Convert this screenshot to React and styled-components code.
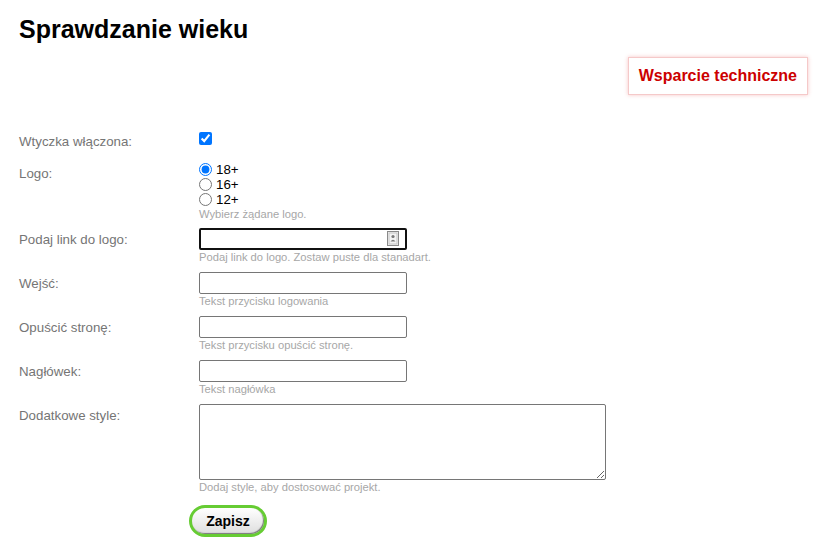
import React from "react";
import styled, { createGlobalStyle } from "styled-components";

const Global = createGlobalStyle`
  html, body { margin: 0; padding: 0; background: #fff; }
  body { font-family: Arial, "Liberation Sans", sans-serif; color: #000; }
  * { box-sizing: border-box; }
`;

const Page = styled.div`
  padding: 0 28px 0 19px;
`;

const Title = styled.h1`
  margin: 15px 0 0;
  font-size: 25px;
  line-height: 28px;
  font-weight: 700;
  color: #000;
`;

const SupportBar = styled.div`
  display: flex;
  justify-content: flex-end;
  margin-top: 14px;
`;

const SupportLink = styled.a`
  display: block;
  padding: 9px 10px;
  border: 1px solid #f5c9c9;
  box-shadow: 0 0 4px rgba(230, 60, 60, 0.3);
  background: #fff;
  color: #cc0000;
  font-weight: 700;
  font-size: 16px;
  line-height: 18px;
  text-decoration: none;
  cursor: pointer;
`;

const Form = styled.form`
  margin-top: 35px;
  display: flex;
  flex-direction: column;
`;

const Row = styled.div`
  display: grid;
  grid-template-columns: 180px 1fr;
  margin-bottom: ${(p) => p.$gap ?? 7}px;
`;

const Label = styled.label`
  padding-top: 4px;
  font-size: 13.3px;
  line-height: 15px;
  color: #757575;
`;

const Field = styled.div`
  display: flex;
  flex-direction: column;
  align-items: flex-start;
`;

const Check = styled.input`
  margin: 2px 0 0;
  width: 13px;
  height: 13px;
`;

const RadioList = styled.div`
  margin-top: 0;
  display: flex;
  flex-direction: column;
`;

const RadioOption = styled.label`
  display: flex;
  align-items: center;
  gap: 4px;
  height: 15px;
  font-size: 13.3px;
  color: #000;
`;

const Radio = styled.input`
  margin: 0;
  width: 13px;
  height: 13px;
`;

const Hint = styled.div`
  font-size: 11.2px;
  line-height: 15px;
  color: #a7a7a7;
`;

const InputWrap = styled.div`
  position: relative;
  width: 208px;
  height: 22px;
`;

const TextInput = styled.input`
  display: block;
  width: 208px;
  height: 22px;
  padding: 1px 4px;
  border: ${(p) => (p.$focused ? "2px solid #111" : "1px solid #767676")};
  border-radius: 2px;
  font-family: Arial, "Liberation Sans", sans-serif;
  font-size: 13px;
  background: #fff;
  outline: none;
`;

const FieldIcon = styled.svg`
  position: absolute;
  right: 8px;
  top: 3px;
  pointer-events: none;
`;

const TextArea = styled.textarea`
  display: block;
  width: 407px;
  height: 76px;
  border: 1px solid #767676;
  border-radius: 2px;
  font-family: Arial, "Liberation Sans", sans-serif;
  font-size: 13px;
  padding: 2px;
  outline: none;
`;

const SaveButton = styled.button`
  margin-left: -10px;
  width: 78px;
  height: 32px;
  border: 3px solid #66cc33;
  border-radius: 16px;
  background: linear-gradient(#ffffff, #dedede);
  box-shadow: inset -1px -1px 1px #777;
  font-family: Arial, "Liberation Sans", sans-serif;
  font-weight: 700;
  font-size: 14px;
  color: #000;
  cursor: pointer;
`;

const ContactIcon = () => (
  <FieldIcon width="12" height="15" viewBox="0 0 12 15">
    <rect x="0.5" y="0.5" width="11" height="14" fill="#f4f4f4" stroke="#8a8a8a" />
    <rect x="2" y="2" width="8" height="11" fill="none" stroke="#c4c4c4" />
    <circle cx="6" cy="5.5" r="1.6" fill="#7a7a7a" />
    <path d="M3.5 10.5 Q6 6.8 8.5 10.5 Z" fill="#7a7a7a" />
  </FieldIcon>
);

const textRows = [
  { label: "Wejść:", hint: "Tekst przycisku logowania" },
  { label: "Opuścić stronę:", hint: "Tekst przycisku opuścić stronę." },
  { label: "Nagłówek:", hint: "Tekst nagłówka" },
];

export default function App() {
  return (
    <Page>
      <Global />
      <Title>Sprawdzanie wieku</Title>
      <SupportBar>
        <SupportLink>Wsparcie techniczne</SupportLink>
      </SupportBar>
      <Form onSubmit={(e) => e.preventDefault()}>
        <Row $gap={13}>
          <Label>Wtyczka włączona:</Label>
          <Field>
            <Check type="checkbox" defaultChecked />
          </Field>
        </Row>
        <Row $gap={6}>
          <Label>Logo:</Label>
          <Field>
            <RadioList>
              {["18+", "16+", "12+"].map((v, i) => (
                <RadioOption key={v}>
                  <Radio type="radio" name="logo" defaultChecked={i === 0} />
                  {v}
                </RadioOption>
              ))}
            </RadioList>
            <Hint>Wybierz żądane logo.</Hint>
          </Field>
        </Row>
        <Row>
          <Label>Podaj link do logo:</Label>
          <Field>
            <InputWrap>
              <TextInput type="text" $focused />
              <ContactIcon />
            </InputWrap>
            <Hint>Podaj link do logo. Zostaw puste dla stanadart.</Hint>
          </Field>
        </Row>
        {textRows.map((r) => (
          <Row key={r.label}>
            <Label>{r.label}</Label>
            <Field>
              <TextInput type="text" />
              <Hint>{r.hint}</Hint>
            </Field>
          </Row>
        ))}
        <Row $gap={10}>
          <Label>Dodatkowe style:</Label>
          <Field>
            <TextArea />
            <Hint>Dodaj style, aby dostosować projekt.</Hint>
          </Field>
        </Row>
        <Row>
          <span />
          <Field>
            <SaveButton type="submit">Zapisz</SaveButton>
          </Field>
        </Row>
      </Form>
    </Page>
  );
}
